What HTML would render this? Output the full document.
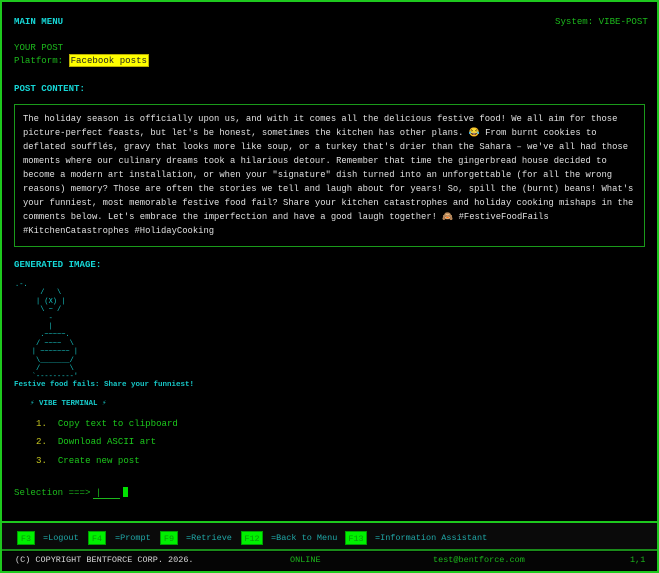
<!DOCTYPE html>
<html><head><meta charset="utf-8"><style>
*{margin:0;padding:0;box-sizing:border-box}
body{width:659px;height:573px;background:#000;font-family:"Liberation Mono",monospace;font-size:9.1px;overflow:hidden;position:relative;color:#1cc81c}
.frame{position:absolute;left:0;top:0;width:659px;height:573px;border:2px solid #1ec81e}
.a{position:absolute;white-space:pre}
.cy{color:#16d6d6;font-weight:bold}
.g{color:#1cb81c}
.box{position:absolute;left:14px;top:104px;width:631px;height:143px;border:1px solid #1a9a1a}
.txt{position:absolute;left:23px;top:112px;color:#e0e0e0;line-height:14px;white-space:pre;font-size:8.85px}
.hl{background:#ffff00;color:#222;border:1px solid #bbb000;padding:0 1px}
.art{position:absolute;left:15px;top:281px;color:#17c8c8;font-size:7px;line-height:8.4px;white-space:pre}
.fk{position:absolute;top:521px;left:2px;width:655px;height:30px;background:#0a0a0a;border-top:2px solid #1ec81e;border-bottom:2px solid #1a8a1a}
.k{position:absolute;top:8px;height:14px;background:#00f000;color:#0a9a0a;text-align:center;line-height:14px;font-size:8.5px;border:1px solid #00a000}
.kl{position:absolute;top:8px;line-height:14px;color:#20a8a8;font-size:8.5px;white-space:pre}
.st{position:absolute;top:552px;left:2px;width:655px;height:18px;background:#050505;font-size:8.5px;line-height:17px}
.y{color:#c8c820}
</style></head><body>
<div class="frame"></div>
<div class="a cy" style="left:14px;top:16px">MAIN MENU</div>
<div class="a g" style="left:555px;top:16px">System: VIBE-POST</div>
<div class="a g" style="left:14px;top:42px">YOUR POST</div>
<div class="a g" style="left:14px;top:55px">Platform: <span class="hl">Facebook posts</span></div>
<div class="a cy" style="left:14px;top:83px">POST CONTENT:</div>
<div class="box"></div>
<div class="txt">The holiday season is officially upon us, and with it comes all the delicious festive food! We all aim for those
picture-perfect feasts, but let's be honest, sometimes the kitchen has other plans. 😂 From burnt cookies to
deflated soufflés, gravy that looks more like soup, or a turkey that's drier than the Sahara – we've all had those
moments where our culinary dreams took a hilarious detour. Remember that time the gingerbread house decided to
become a modern art installation, or when your "signature" dish turned into an unforgettable (for all the wrong
reasons) memory? Those are often the stories we tell and laugh about for years! So, spill the (burnt) beans! What's
your funniest, most memorable festive food fail? Share your kitchen catastrophes and holiday cooking mishaps in the
comments below. Let's embrace the imperfection and have a good laugh together! 🙈 #FestiveFoodFails
#KitchenCatastrophes #HolidayCooking</div>
<div class="a cy" style="left:14px;top:259px">GENERATED IMAGE:</div>
<div class="art">.-.
      /   \
     | (X) |
      \ ~ /
        -
        |
      .~~~~~.
     / ~~~~  \
    | ~~~~~~~ |
     \_______/
     /       \
    `---------'</div>
<div class="a" style="left:14px;top:381px;color:#17c8c8;font-size:7.5px;font-weight:bold">Festive food fails: Share your funniest!</div>
<div class="a" style="left:30px;top:398px;color:#17c8c8;font-size:7.5px;font-weight:bold">⚡ VIBE TERMINAL ⚡</div>
<div class="a" style="left:36px;top:418px"><span class="y">1.</span>  Copy text to clipboard</div>
<div class="a" style="left:36px;top:436px"><span class="y">2.</span>  Download ASCII art</div>
<div class="a" style="left:36px;top:455px"><span class="y">3.</span>  Create new post</div>
<div class="a g" style="left:14px;top:487px">Selection ===&gt; |</div>
<div style="position:absolute;left:93px;top:498px;width:27px;height:1px;background:#1cb81c"></div>
<div style="position:absolute;left:123px;top:487px;width:5px;height:10px;background:#00e000"></div>
<div class="fk">
<div class="k" style="left:15px;width:18px">F3</div><div class="kl" style="left:41px">=Logout</div>
<div class="k" style="left:86px;width:18px">F4</div><div class="kl" style="left:113px">=Prompt</div>
<div class="k" style="left:158px;width:18px">F9</div><div class="kl" style="left:184px">=Retrieve</div>
<div class="k" style="left:239px;width:22px">F12</div><div class="kl" style="left:269px">=Back to Menu</div>
<div class="k" style="left:343px;width:22px">F13</div><div class="kl" style="left:373px">=Information Assistant</div>
</div>
<div class="st">
<span class="a" style="left:13px;color:#d8d8d8">(C) COPYRIGHT BENTFORCE CORP. 2026.</span>
<span class="a" style="left:288px;color:#1cb81c">ONLINE</span>
<span class="a" style="left:431px;color:#1cb81c">test@bentforce.com</span>
<span class="a" style="left:628px;color:#1cb81c">1,1</span>
</div>
</body></html>
